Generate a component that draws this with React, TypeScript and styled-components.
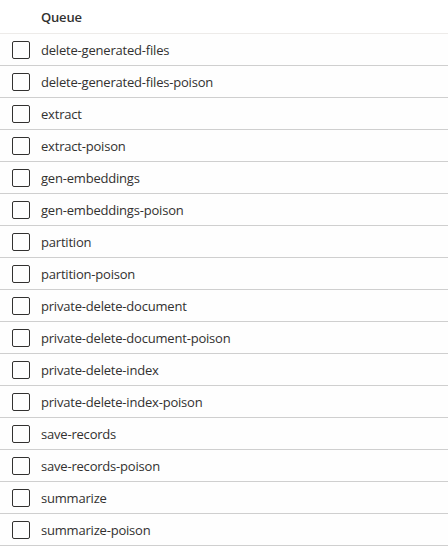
import React from "react";
import styled, { createGlobalStyle } from "styled-components";

const Global = createGlobalStyle`
  html, body { margin: 0; padding: 0; background: #ffffff; }
  body { font-family: "Segoe UI", "Open Sans", "Noto Sans", sans-serif; }
`;

const List = styled.div`
  width: 448px;
  display: flex;
  flex-direction: column;
`;

const Header = styled.div`
  height: 33px;
  display: flex;
  align-items: center;
  padding-left: 41px;
  border-bottom: 1px solid #edebe9;
  font-size: 13px;
  font-weight: 600;
  color: #323130;
  letter-spacing: -0.2px;
`;

const Row = styled.div`
  height: 31px;
  display: flex;
  align-items: center;
  border-bottom: 1px solid #cfcfcf;
  background: #fefefe;
`;

const Box = styled.div`
  width: 16px;
  height: 16px;
  margin-left: 12px;
  margin-right: 11px;
  border: 1px solid #323130;
  border-radius: 2px;
  flex: none;
  box-sizing: content-box;
`;

const Name = styled.span`
  font-size: 13px;
  color: #323130;
  letter-spacing: -0.2px;
`;

const queues = [
  "delete-generated-files",
  "delete-generated-files-poison",
  "extract",
  "extract-poison",
  "gen-embeddings",
  "gen-embeddings-poison",
  "partition",
  "partition-poison",
  "private-delete-document",
  "private-delete-document-poison",
  "private-delete-index",
  "private-delete-index-poison",
  "save-records",
  "save-records-poison",
  "summarize",
  "summarize-poison",
];

export default function App() {
  return (
    <>
      <Global />
      <List>
        <Header>Queue</Header>
        {queues.map((q) => (
          <Row key={q}>
            <Box />
            <Name>{q}</Name>
          </Row>
        ))}
      </List>
    </>
  );
}
